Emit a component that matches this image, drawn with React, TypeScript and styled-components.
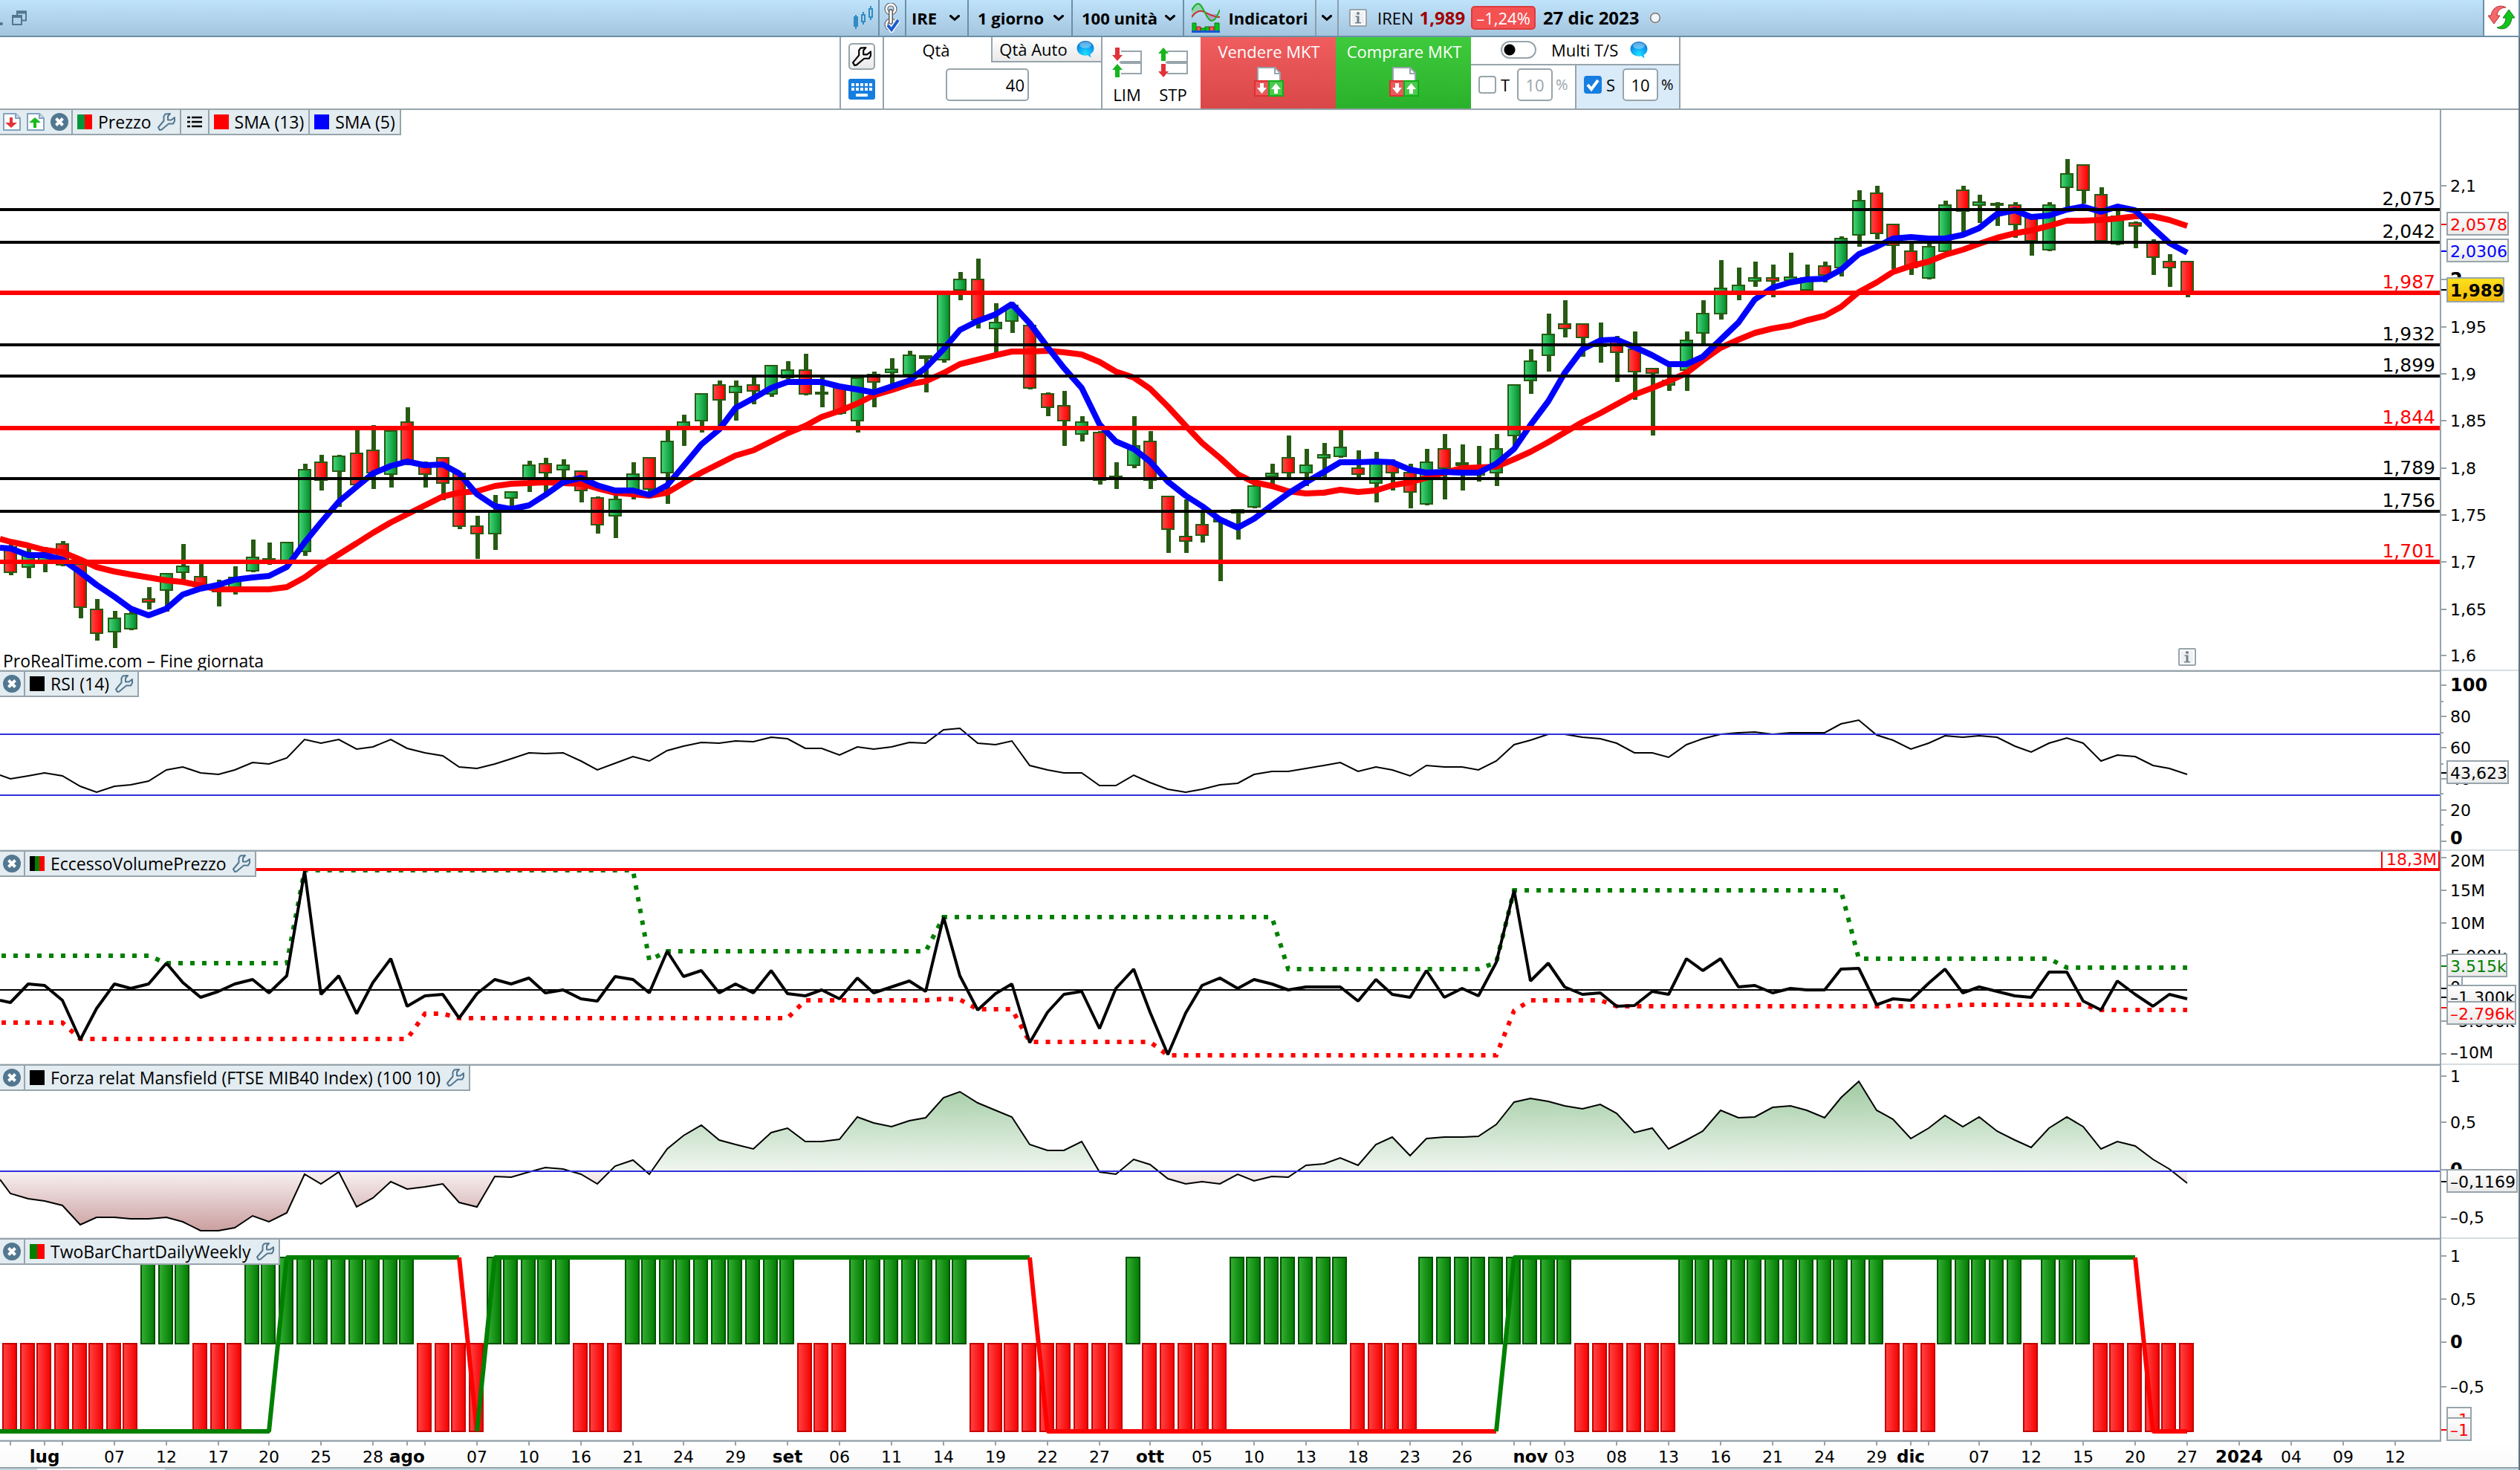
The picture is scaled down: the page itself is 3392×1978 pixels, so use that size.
import React from "react";
import styled, { createGlobalStyle } from "styled-components";

const LINE = "#97a4ab";
const LIGHT = "#d6dde0";
const STEEL = "#6b8fa8";
const SLATE = "#527790";
const UI_FONT = '"Open Sans", "Noto Sans", sans-serif';
const NUM_FONT = '"DejaVu Sans", Verdana, sans-serif';

/* ---------- market data, in plot coordinates ---------- */

const PLOT_WIDTH = 3284;
const barX = (i: number) => 2 * Math.round((14 + 23.254 * i) / 2);

type Kind = "u" | "d";
type Candle = [Kind, number, number, number, number];

// kind, wick top, body top, body bottom, wick bottom
const CANDLES: Candle[] = [
  ["d", 730, 735, 771, 774], ["u", 737, 745, 764, 778], ["u", 736, 748, 756, 770], ["d", 728, 731, 761, 762],
  ["d", 758, 758, 818, 832], ["d", 806, 819, 853, 862], ["u", 822, 831, 851, 872], ["u", 822, 825, 847, 848],
  ["d", 790, 805, 811, 820], ["u", 771, 771, 795, 823], ["u", 732, 761, 771, 783], ["d", 759, 775, 788, 788],
  ["u", 780, 791, 797, 816], ["u", 762, 776, 797, 800], ["u", 726, 749, 769, 770], ["u", 730, 751, 755, 760],
  ["u", 729, 729, 758, 758], ["u", 624, 631, 743, 748], ["d", 612, 621, 647, 660], ["u", 612, 613, 635, 682],
  ["d", 577, 609, 653, 653], ["d", 572, 605, 637, 658], ["u", 575, 579, 639, 656], ["d", 548, 567, 620, 626],
  ["d", 621, 624, 639, 656], ["d", 615, 615, 651, 673], ["d", 635, 636, 709, 712], ["d", 694, 707, 719, 752],
  ["u", 666, 687, 719, 740], ["u", 661, 661, 671, 687], ["u", 620, 625, 645, 662], ["d", 616, 623, 637, 663],
  ["u", 618, 625, 633, 645], ["d", 633, 633, 661, 676], ["d", 668, 669, 707, 718], ["u", 663, 671, 695, 724],
  ["u", 622, 637, 663, 672], ["d", 615, 615, 659, 667], ["u", 578, 593, 637, 678], ["u", 558, 567, 577, 600],
  ["u", 529, 529, 567, 582], ["d", 512, 517, 539, 578], ["u", 512, 519, 529, 566], ["d", 507, 517, 527, 544],
  ["u", 491, 491, 531, 534], ["u", 486, 497, 509, 510], ["d", 476, 497, 531, 532], ["u", 508, 527, 531, 548],
  ["d", 517, 518, 557, 558], ["u", 508, 508, 567, 582], ["d", 500, 503, 515, 548], ["u", 482, 496, 502, 527],
  ["u", 472, 477, 505, 505], ["u", 478, 478, 483, 528], ["u", 395, 395, 485, 488], ["u", 366, 375, 391, 404],
  ["d", 348, 375, 431, 442], ["u", 408, 433, 443, 475], ["u", 409, 410, 433, 448], ["d", 437, 437, 523, 524],
  ["d", 528, 529, 549, 560], ["d", 526, 545, 567, 600], ["u", 560, 567, 585, 594], ["d", 580, 581, 647, 652],
  ["u", 622, 640, 644, 658], ["u", 560, 599, 627, 630], ["d", 580, 593, 647, 658], ["d", 667, 667, 713, 744],
  ["d", 672, 721, 729, 744], ["d", 687, 705, 721, 730], ["u", 697, 698, 703, 782], ["u", 685, 685, 691, 726],
  ["u", 652, 653, 683, 684], ["u", 624, 636, 642, 652], ["d", 586, 615, 637, 643], ["u", 604, 625, 637, 654],
  ["u", 596, 611, 617, 643], ["u", 578, 601, 615, 616], ["d", 606, 629, 639, 643], ["u", 608, 618, 651, 676],
  ["d", 618, 623, 637, 660], ["d", 624, 635, 663, 684], ["u", 604, 621, 679, 680], ["d", 584, 603, 631, 672],
  ["u", 598, 622, 627, 660], ["u", 600, 632, 640, 648], ["u", 584, 603, 637, 654], ["u", 517, 517, 587, 602],
  ["u", 470, 485, 513, 530], ["u", 422, 449, 479, 500], ["d", 404, 435, 443, 454], ["d", 435, 435, 455, 480],
  ["u", 434, 462, 467, 488], ["d", 452, 458, 475, 514], ["d", 446, 469, 501, 538], ["d", 495, 495, 503, 586],
  ["u", 492, 511, 519, 526], ["u", 446, 457, 499, 526], ["u", 404, 421, 449, 463], ["u", 350, 387, 423, 430],
  ["u", 360, 383, 395, 404], ["u", 352, 373, 379, 386], ["d", 356, 373, 379, 400], ["u", 340, 372, 378, 378],
  ["u", 356, 373, 391, 391], ["d", 352, 357, 371, 380], ["u", 318, 320, 361, 372], ["u", 256, 269, 317, 332],
  ["d", 250, 259, 315, 322], ["d", 301, 301, 331, 362], ["d", 327, 337, 361, 370], ["u", 318, 331, 375, 376],
  ["u", 270, 275, 339, 339], ["d", 250, 255, 285, 317], ["u", 262, 271, 277, 300], ["u", 272, 273, 277, 304],
  ["d", 272, 275, 303, 320], ["d", 290, 292, 325, 344], ["u", 272, 275, 337, 338], ["u", 214, 233, 253, 282],
  ["d", 221, 221, 257, 274], ["d", 252, 261, 325, 325], ["u", 282, 290, 329, 330], ["d", 298, 299, 305, 334],
  ["d", 322, 326, 347, 370], ["d", 342, 351, 361, 386], ["d", 351, 351, 393, 400],
];

// every series starts with the value at the left edge of the plot
const SMA13 = [
  725, 729, 734, 740, 743, 753, 763, 769, 773, 777, 781, 783, 788, 793, 793, 793, 793, 790, 777, 761, 746, 731, 717, 703,
  692, 680, 668, 663, 661, 654, 651, 650, 649, 650, 651, 657, 663, 665, 667, 663, 650, 636, 624, 613, 606, 594, 583, 573,
  561, 553, 543, 532, 525, 517, 513, 502, 490, 484, 478, 473, 473, 472, 474, 477, 487, 500, 508, 523, 547, 573, 596, 616,
  638, 649, 654, 661, 664, 663, 659, 662, 660, 653, 649, 643, 636, 630, 629, 628, 618, 608, 595, 582, 568, 556, 544, 531,
  522, 513, 502, 485, 468, 457, 448, 442, 438, 431, 425, 413, 393, 380, 366, 358, 352, 343, 336, 328, 320, 314, 310, 304,
  297, 297, 296, 294, 291, 291, 296, 304,
];
const SMA5 = [
  737, 738, 747, 747, 753, 770, 787, 803, 819, 828, 819, 800, 792, 787, 780, 777, 775, 763, 730, 703, 675, 655, 637, 627,
  621, 626, 625, 637, 665, 681, 685, 680, 666, 649, 643, 653, 660, 660, 666, 653, 627, 598, 578, 549, 536, 522, 514, 514,
  514, 520, 524, 528, 520, 512, 495, 470, 444, 432, 423, 409, 435, 467, 495, 522, 571, 594, 604, 621, 648, 667, 681, 699,
  710, 698, 680, 664, 649, 635, 622, 622, 621, 622, 632, 636, 635, 636, 636, 624, 604, 572, 540, 502, 470, 458, 457, 467,
  478, 490, 490, 480, 457, 434, 403, 387, 380, 376, 375, 363, 342, 332, 321, 319, 321, 321, 316, 307, 288, 283, 292, 290,
  282, 278, 285, 278, 283, 307, 327, 340,
];
const RSI = [
  1043, 1048, 1044, 1040, 1044, 1058, 1066, 1058, 1056, 1051, 1036, 1032, 1040, 1042, 1036, 1026, 1028, 1020, 995, 1000,
  995, 1008, 1005, 995, 1007, 1013, 1017, 1032, 1034, 1028, 1021, 1013, 1014, 1013, 1024, 1036, 1027, 1018, 1024, 1010,
  1004, 999, 1000, 997, 998, 992, 994, 1007, 1007, 1016, 1005, 1008, 1005, 999, 1000, 982, 980, 1000, 1002, 997, 1030,
  1036, 1040, 1040, 1057, 1057, 1043, 1053, 1062, 1066, 1062, 1056, 1054, 1042, 1038, 1038, 1034, 1030, 1026, 1038, 1032,
  1036, 1044, 1030, 1032, 1032, 1036, 1024, 1002, 996, 988, 988, 992, 994, 1000, 1013, 1013, 1019, 1002, 994, 988, 986,
  985, 988, 986, 986, 986, 974, 969, 989, 996, 1008, 1000, 990, 992, 990, 992, 1004, 1012, 1000, 993, 1000, 1024, 1016,
  1018, 1030, 1034, 1042,
];
const EXCESS = [
  1346, 1349, 1324, 1326, 1346, 1399, 1357, 1324, 1330, 1324, 1296, 1322, 1342, 1334, 1324, 1318, 1336, 1313, 1172, 1338,
  1313, 1364, 1322, 1290, 1354, 1340, 1338, 1370, 1337, 1318, 1324, 1316, 1336, 1332, 1344, 1347, 1314, 1318, 1336, 1280,
  1314, 1306, 1336, 1324, 1336, 1306, 1337, 1340, 1332, 1344, 1316, 1336, 1328, 1320, 1334, 1234, 1313, 1359, 1337, 1324,
  1403, 1362, 1338, 1334, 1384, 1330, 1304, 1362, 1419, 1363, 1326, 1316, 1330, 1318, 1324, 1332, 1328, 1328, 1328, 1347,
  1318, 1338, 1342, 1306, 1342, 1330, 1340, 1295, 1198, 1320, 1296, 1328, 1338, 1336, 1354, 1353, 1334, 1338, 1290, 1306,
  1290, 1328, 1326, 1336, 1330, 1332, 1332, 1304, 1303, 1352, 1344, 1346, 1323, 1304, 1336, 1328, 1334, 1340, 1342, 1308,
  1308, 1347, 1359, 1320, 1338, 1354, 1338, 1344,
];
const MANSFIELD = [
  1587, 1606, 1613, 1616, 1622, 1648, 1638, 1638, 1640, 1640, 1638, 1644, 1656, 1656, 1652, 1636, 1644, 1632, 1580, 1593,
  1577, 1624, 1612, 1590, 1600, 1597, 1593, 1618, 1624, 1583, 1584, 1577, 1571, 1573, 1580, 1593, 1569, 1561, 1580, 1546,
  1528, 1514, 1534, 1540, 1546, 1524, 1518, 1536, 1536, 1533, 1503, 1511, 1516, 1508, 1504, 1477, 1469, 1484, 1494, 1503,
  1540, 1548, 1548, 1536, 1577, 1580, 1560, 1567, 1586, 1593, 1590, 1593, 1580, 1589, 1583, 1584, 1568, 1566, 1558, 1568,
  1540, 1530, 1555, 1532, 1530, 1530, 1529, 1513, 1483, 1478, 1482, 1488, 1492, 1486, 1498, 1524, 1518, 1546, 1534, 1522,
  1494, 1504, 1503, 1490, 1488, 1494, 1504, 1477, 1455, 1494, 1506, 1532, 1518, 1501, 1516, 1503, 1522, 1534, 1544, 1518,
  1503, 1516, 1546, 1536, 1542, 1560, 1573, 1592,
];

// [bar, y] corners of the stepped bands
const UPPER_BAND: [number, number][] = [
  [-0.5, 1286], [8, 1286], [9, 1296], [16, 1296], [17, 1171], [36, 1171], [37, 1292], [38, 1280], [53, 1280], [54, 1234],
  [73, 1234], [74, 1304], [85, 1304], [86, 1295], [87, 1198], [106, 1198], [107, 1290], [118, 1290], [119, 1302], [126, 1302],
];
const LOWER_BAND: [number, number][] = [
  [-0.5, 1376], [3, 1376], [4, 1398], [23, 1398], [24, 1364], [25, 1364], [26, 1370], [45, 1370], [46, 1346], [53, 1346],
  [54, 1344], [55, 1345], [56, 1358], [58, 1358], [59, 1402], [66, 1402], [67, 1420], [86, 1420], [87, 1360], [88, 1346],
  [92, 1346], [93, 1354], [112, 1354], [113, 1352], [120, 1352], [121, 1359], [126, 1359],
];

// first bar of each daily run, starting with a falling one
const DAILY_RUNS = [0, 8, 11, 14, 24, 28, 33, 36, 46, 49, 56, 65, 66, 71, 78, 82, 91, 97, 109, 112, 117, 118, 121, 127];
const WEEKLY: { color: string; points: [number, number][] }[] = [
  { color: "#008000", points: [[-0.7, 1926], [15, 1926], [16, 1692], [26, 1692]] },
  { color: "#ff0000", points: [[26, 1692], [27, 1926]] },
  { color: "#008000", points: [[27, 1926], [28, 1692], [59, 1692]] },
  { color: "#ff0000", points: [[59, 1692], [60, 1926], [86, 1926]] },
  { color: "#008000", points: [[86, 1926], [87, 1692], [123, 1692]] },
  { color: "#ff0000", points: [[123, 1692], [124, 1926], [126, 1926]] },
];

const LEVELS = [
  { label: "2,075", y: 282, key: false },
  { label: "2,042", y: 326, key: false },
  { label: "1,987", y: 394, key: true },
  { label: "1,932", y: 464, key: false },
  { label: "1,899", y: 506, key: false },
  { label: "1,844", y: 576, key: true },
  { label: "1,789", y: 644, key: false },
  { label: "1,756", y: 688, key: false },
  { label: "1,701", y: 756, key: true },
];

const DATES: [number, string][] = [
  [0, ""], [2, "lug"], [3, ""], [6, "07"], [9, "12"], [12, "17"], [15, "20"], [18, "25"], [21, "28"], [23, "ago"], [24, ""],
  [27, "07"], [30, "10"], [33, "16"], [36, "21"], [39, "24"], [42, "29"], [45, "set"], [48, "06"], [51, "11"], [54, "14"],
  [57, "19"], [60, "22"], [63, "27"], [66, "ott"], [69, "05"], [72, "10"], [75, "13"], [78, "18"], [81, "23"], [84, "26"],
  [87, ""], [88, "nov"], [90, "03"], [93, "08"], [96, "13"], [99, "16"], [102, "21"], [105, "24"], [108, "29"],
  [110, "dic"], [111, ""], [114, "07"], [117, "12"], [120, "15"], [123, "20"], [126, "27"], [129, "2024"], [132, "04"],
  [135, "09"], [138, "12"],
];

const trace = (values: number[]) => values.map((v, i) => `${i === 0 ? 0 : barX(i - 1)},${v}`).join(" ");
const corners = (points: [number, number][]) => points.map(([i, y]) => `${barX(i)},${y}`).join(" ");

/* ---------- page frame ---------- */

const GlobalStyle = createGlobalStyle`
  body { margin: 0; background: #fff; }
  *, *::before, *::after { box-sizing: border-box; }
  button, input, select { font: inherit; color: inherit; margin: 0; }
  button { cursor: pointer; }
  svg { display: block; flex: none; }
`;

const Page = styled.main`
  min-height: 100vh;
  display: flex;
  flex-direction: column;
  background: #fff;
  color: #000;
  font: 22px/30px ${UI_FONT};
`;

const TopBar = styled.header`
  display: grid;
  grid-template-columns: 1fr auto 1fr;
  height: 50px;
  background: linear-gradient(#bfe3fb, #a4c5de);
  border-bottom: 2px solid ${STEEL};
`;

const WindowControls = styled.div`
  display: flex;
  align-items: center;
  gap: 12px;
`;

const Dot = styled.span`
  width: 4px;
  height: 4px;
  margin-top: 16px;
  border-radius: 0 2px 2px 0;
  background: ${SLATE};
`;

const BareButton = styled.button`
  display: flex;
  align-items: center;
  justify-content: center;
  padding: 0;
  border: 0;
  background: none;
`;

const BarGroup = styled.div`
  display: flex;
`;

const BarCell = styled.div<{ $w: number; $grey?: boolean; $end?: boolean }>`
  display: flex;
  align-items: center;
  justify-content: ${(p) => (p.$end ? "flex-end" : "center")};
  width: ${(p) => p.$w}px;
  padding-right: ${(p) => (p.$end ? 6 : 0)}px;
  border-right: 2px solid ${(p) => (p.$grey ? "#8a9dab" : STEEL)};
`;

const PickerCell = styled.div<{ $w: number }>`
  display: grid;
  align-items: center;
  width: ${(p) => p.$w}px;
  border-right: 2px solid ${STEEL};
  > * { grid-area: 1 / 1; }
  > svg { justify-self: end; margin-right: 10px; pointer-events: none; }
`;

const Picker = styled.select<{ $pad: number }>`
  appearance: none;
  width: 100%;
  height: 48px;
  padding: 0 0 0 ${(p) => p.$pad}px;
  border: 0;
  background: none;
  font-weight: 700;
`;

const IndicatorButton = styled(BareButton)`
  width: 178px;
  gap: 12px;
  border-right: 2px solid #8a9dab;
  font-weight: 700;
`;

const Quote = styled.div`
  display: flex;
  align-items: center;
  width: 460px;
  padding-left: 14px;
`;

const QuoteName = styled.span`
  margin: 0 8px 0 14px;
`;

const QuotePrice = styled.strong`
  color: #a00000;
  font-size: 24px;
`;

const QuoteChange = styled.span`
  height: 32px;
  margin: 0 10px 0 8px;
  padding: 0 5px;
  border: 2px solid #dd3b3e;
  border-radius: 5px;
  background: #f45153;
  color: #fff;
  line-height: 28px;
`;

const QuoteDate = styled.strong`
  margin-right: 12px;
  font-size: 24px;
`;

const ReloadCell = styled(BareButton)`
  justify-self: end;
  width: 50px;
  border-left: 2px solid ${STEEL};
  border-right: 2px solid ${STEEL};
  background: #fff;
`;

/* ---------- trading strip ---------- */

const Body = styled.div`
  flex: 1;
  display: flex;
  flex-direction: column;
  border-right: 2px solid #60737e;
`;

const TradeStrip = styled.section`
  display: flex;
  justify-content: center;
  height: 98px;
  padding-left: 2px;
  border-bottom: 2px solid ${LINE};
`;

const ToolCell = styled.div`
  display: flex;
  flex-direction: column;
  align-items: center;
  gap: 12px;
  width: 60px;
  padding-top: 8px;
  border: solid ${LINE};
  border-width: 0 2px;
`;

const WrenchButton = styled(BareButton)`
  width: 36px;
  height: 36px;
  border: 2px solid ${LINE};
  border-radius: 5px;
  background: linear-gradient(#fff, #e9e9e9);
`;

const QtyCell = styled.div`
  width: 294px;
  border-right: 2px solid ${LINE};
`;

const QtyTabs = styled.div`
  display: flex;
  height: 34px;
`;

const QtyTab = styled(BareButton)<{ $off?: boolean }>`
  width: ${(p) => (p.$off ? 148 : 144)}px;
  gap: 12px;
  padding-right: ${(p) => (p.$off ? 0 : 4)}px;
  background: ${(p) => (p.$off ? "linear-gradient(#fff, #e9e9e9)" : "none")};
  border: solid ${LINE};
  border-width: ${(p) => (p.$off ? "0 0 2px 2px" : "0")};
`;

const QtyField = styled.div`
  display: flex;
  justify-content: center;
  padding: 8px 14px 0 0;
`;

const NumberInput = styled.input<{ $w: number; $muted?: boolean; $right?: boolean }>`
  width: ${(p) => p.$w}px;
  height: 44px;
  padding: 0 ${(p) => (p.$right ? 4 : 0)}px 0 0;
  border: 2px solid ${LINE};
  border-radius: 5px;
  background: #fff;
  color: ${(p) => (p.$muted ? LINE : "#000")};
  text-align: ${(p) => (p.$right ? "right" : "center")};
`;

const OrderCell = styled.div`
  display: flex;
  justify-content: center;
  width: 132px;
  padding-right: 4px;
`;

const OrderButton = styled(BareButton)`
  flex-direction: column;
  justify-content: flex-start;
  gap: 8px;
  width: 62px;
  padding-top: 14px;
`;

const MarketButton = styled(BareButton)<{ $side: "sell" | "buy" }>`
  flex-direction: column;
  justify-content: flex-start;
  gap: 6px;
  width: 182px;
  padding: 4px 0 0 2px;
  background: ${(p) => (p.$side === "sell" ? "linear-gradient(#f05d5f, #d94748)" : "linear-gradient(#3fca3c, #2ab12b)")};
  color: #fff;
`;

const StopCell = styled.div`
  width: 282px;
  border-right: 2px solid ${LINE};
`;

const MultiRow = styled.div`
  display: flex;
  align-items: center;
  height: 38px;
  padding: 0 0 2px 40px;
  border-bottom: 2px solid ${LINE};
`;

const MultiLabel = styled.label`
  display: flex;
  align-items: center;
  gap: 20px;
  margin-right: 16px;
`;

const Toggle = styled.input`
  appearance: none;
  width: 48px;
  height: 24px;
  margin: 0;
  border: 2px solid ${LINE};
  border-radius: 12px;
  background: radial-gradient(circle at 10px 10px, #000 7px, #fff 8px);
`;

const StopRow = styled.div`
  display: grid;
  grid-template-columns: 142px 1fr;
`;

const StopBox = styled.div<{ $active?: boolean }>`
  display: flex;
  align-items: center;
  height: 58px;
  padding-left: 10px;
  padding-bottom: 6px;
  border-right: ${(p) => (p.$active ? "0" : `2px solid ${LINE}`)};
  background: ${(p) => (p.$active ? "#d9eaf9" : "#fff")};
`;

const StopCheck = styled.label`
  display: flex;
  align-items: center;
  gap: 6px;
  width: 52px;
`;

const CheckBox = styled.input`
  appearance: none;
  width: 24px;
  height: 24px;
  margin: 0;
  border: 2px solid ${LINE};
  border-radius: 4px;
  background: #fff;
  &:checked {
    border-color: #167ee0;
    background: #167ee0;
  }
`;

const CheckStack = styled.span`
  display: grid;
  > * { grid-area: 1 / 1; }
  > svg { pointer-events: none; }
`;

const Percent = styled.span<{ $muted?: boolean }>`
  margin-left: 4px;
  font-size: 20px;
  color: ${(p) => (p.$muted ? LINE : "#000")};
`;

/* ---------- chart panels ---------- */

const PanelRow = styled.section<{ $h: number }>`
  display: grid;
  grid-template-columns: minmax(0, 1fr) 104px;
  grid-template-rows: minmax(0, 1fr);
  height: ${(p) => p.$h}px;
`;

const Plot = styled.div`
  position: relative;
  border: solid ${LINE};
  border-width: 0 2px 2px 0;
  box-shadow: inset 0 -1px ${LIGHT};
  overflow: hidden;
`;

const Axis = styled.div<{ $last?: boolean }>`
  height: calc(100% - 1px);
  border-bottom: ${(p) => (p.$last ? "0" : `2px solid ${LIGHT}`)};
  overflow: hidden;
`;

const Canvas = styled.svg`
  width: 100%;
  height: 100%;
  overflow: visible;
`;

const Legend = styled.div`
  position: absolute;
  left: 0;
  top: 0;
  display: flex;
  height: 34px;
  background: #e3ecf1;
  border-bottom: 2px solid ${LINE};
  font-size: 23px;
`;

const LegendCell = styled.div<{ $pad: number }>`
  display: flex;
  align-items: center;
  gap: 8px;
  padding: 0 ${(p) => p.$pad}px;
  border-right: 2px solid ${LINE};
`;

const Swatch = styled.span<{ $colors: string[] }>`
  width: 20px;
  height: 20px;
  background: ${(p) => {
    const step = 100 / p.$colors.length;
    return `linear-gradient(90deg, ${p.$colors.map((c, i) => `${c} ${i * step}% ${(i + 1) * step}%`).join(", ")})`;
  }};
`;

const Watermark = styled.span`
  position: absolute;
  left: 4px;
  bottom: 0;
  font-size: 23px;
  line-height: 26px;
`;

const DateRow = styled.footer`
  display: grid;
  grid-template-columns: minmax(0, 1fr) 106px;
  grid-template-rows: minmax(0, 1fr);
  height: 36px;
  border-bottom: 2px solid ${LINE};
  background: linear-gradient(#fff, #fafafa);
`;

const BottomStrip = styled.div`
  height: 2px;
  background: linear-gradient(90deg, #c4d6df 50px, #f4fbfd 50px 222px, #c4d6df 222px);
`;

/* ---------- icons ---------- */

const Chevron = () => (
  <svg width="14" height="8" viewBox="0 0 14 8">
    <path d="M1.5 1.5 7 6.3l5.5-4.8" fill="none" stroke="#000" strokeWidth="3" strokeLinecap="round" />
  </svg>
);

const RestoreIcon = () => (
  <svg width="20" height="20" viewBox="0 0 20 20" fill="none" stroke={SLATE}>
    <path d="M7 6V1.5h12v12h-5" strokeWidth="2" />
    <path d="M6 2.5h13" strokeWidth="4" />
    <rect x="1" y="7" width="12" height="12" strokeWidth="2" />
    <path d="M1 8h12" strokeWidth="4" />
  </svg>
);

const CandlesIcon = () => (
  <svg width="28" height="34" viewBox="0 0 28 34" fill="none" stroke="#318cc4" strokeWidth="2">
    <path d="M4 13v19" />
    <rect x="2" y="16" width="4" height="12" fill="#318cc4" />
    <path d="M14 9v4M14 22v4" />
    <rect x="12" y="13" width="4" height="9" />
    <path d="M24 1v4M24 16v4" />
    <rect x="22" y="5" width="4" height="11" />
  </svg>
);

const LinkIcon = () => (
  <svg width="22" height="40" viewBox="0 0 22 40" fill="none">
    <circle cx="9" cy="8" r="6" stroke="#5a5a5a" strokeWidth="5" />
    <circle cx="9" cy="8" r="6" stroke="#fff" strokeWidth="2.8" />
    <circle cx="9" cy="29" r="6" stroke="#5a5a5a" strokeWidth="5" />
    <circle cx="9" cy="29" r="6" stroke="#fff" strokeWidth="2.8" />
    <path d="M9 11v15" stroke="#5a5a5a" strokeWidth="6" strokeLinecap="round" />
    <path d="M9 11v15" stroke="#fff" strokeWidth="3" strokeLinecap="round" />
    <path d="M5 30l5 6 9-13" stroke="#fff" strokeWidth="7" />
    <path d="M5 30l5 6 9-13" stroke="#1c5cd0" strokeWidth="4" />
  </svg>
);

const IndicatorIcon = () => (
  <svg width="38" height="40" viewBox="0 0 38 40">
    <path d="M0 10C3 4 6 1 9 1s6 4 10 12v-1C13 12 8 10 6 13l-6 9z" fill="#8fd4b0" />
    <path d="M19 13c3 7 5 11 8 11s7-4 10-10c-6 2-12 1-18-1z" fill="#a9a6c4" />
    <path d="M0 19C5 12 9 10 14 11s13 8 24 8" fill="none" stroke="#d02a36" strokeWidth="2" />
    <path d="M0 10C3 4 6 1 9 1c6 0 11 23 18 23 4 0 8-7 11-15" fill="none" stroke="#18b020" strokeWidth="2" />
    <path d="M1 38V27h5v11zM12 38v-4h6v4zM18 38v-6h6v6zM31 38V27h6v11z" fill="#00c814" stroke="#067a10" />
    <path d="M7 38v-6h5v6zM24 38v-6h6v6z" fill="#f45b5b" stroke="#a11" />
    <path d="M0 38.5h38" stroke="#1157d0" strokeWidth="3" />
  </svg>
);

const InfoGlyph = ({ x = 0, y = 0 }: { x?: number; y?: number }) => (
  <g transform={`translate(${x} ${y})`}>
    <rect x="1" y="1" width="22" height="22" rx="1" fill="#fff" stroke={LINE} strokeWidth="2" />
    <rect x="4" y="4" width="16" height="16" fill="#eef0f1" />
    <circle cx="12" cy="6" r="2" fill="#6f818b" />
    <path d="M8.500 9.500h5v8.500h2.500v1.500h-8v-1.500h2.500v-7h-2z" fill="#6f818b" />
  </g>
);

const ReloadIcon = () => (
  <svg width="36" height="34" viewBox="0 0 36 34">
    <path d="M24 3C17-1 6 1 4 14H0l8 11 8-11h-4c0-5 4-11 12-11z" fill="#f3696b" stroke="#b92a30" />
    <path d="M12 30c7 4 18 2 20-13h4L28 6l-8 11h4c0 6-4 12-12 13z" fill="#14c41c" stroke="#0a7d12" />
  </svg>
);

const WrenchIcon = ({ color = SLATE, size = 24 }: { color?: string; size?: number }) => (
  <svg width={size} height={size} viewBox="0 0 24 24">
    <path
      d="M8.500 4.500 10.500 1.500 17 1 14 4.500V9.500H18.500L23 6V11L21 14.500H15L5.500 22.500 3 23 1 19.500 8.500 10.500z"
      fill="none"
      stroke={color}
      strokeWidth="2"
      strokeLinejoin="round"
    />
  </svg>
);

const KeyboardIcon = () => (
  <svg width="36" height="28" viewBox="0 0 36 28">
    <rect width="36" height="28" rx="3" fill="#167ee0" />
    {[4, 10, 16, 22, 28].map((x) => (
      <React.Fragment key={x}>
        <rect x={x} y="6" width="4" height="4" fill="#fff" />
        <rect x={x} y="12" width="4" height="4" fill="#fff" />
      </React.Fragment>
    ))}
    <rect x="10" y="20" width="16" height="4" rx="1" fill="#fff" />
  </svg>
);

const BubbleIcon = () => (
  <svg width="24" height="24" viewBox="0 0 24 24">
    <path d="M12 1c6.500 0 11.500 4.500 11.500 10 0 3.500-2 6.500-5 8l1 4.500-4.500-3.200a14 14 0 0 1-3 .4C5.500 20.700.5 16.500.5 11S5.500 1 12 1z" fill="url(#bubble)" />
    <ellipse cx="12" cy="6.500" rx="8" ry="4.200" fill="#fff" opacity="0.35" />
  </svg>
);

const ArrowUp = "M0 8 7 0l7 8h-4v10H4V8z";
const ArrowDown = "M0 10h4V0h6v10h4L7 18z";

const OrderIcon = ({ limit }: { limit?: boolean }) => (
  <svg width="40" height="40" viewBox="0 0 40 40">
    <path d="M12 5h27v30H12" fill="none" stroke={LINE} strokeWidth="2" />
    <path d="M9 20l3-2h26v4H12z" fill={LINE} />
    <path d={limit ? ArrowDown : ArrowUp} fill={limit ? "#e13238" : "#17b51d"} />
    <path d={limit ? ArrowUp : ArrowDown} transform="translate(0 22)" fill={limit ? "#17b51d" : "#e13238"} />
  </svg>
);

const MarketIcon = () => (
  <svg width="40" height="40" viewBox="0 0 40 40">
    <path d="M5 20V1h23l7 7v12z" fill="#fff" stroke={LINE} strokeWidth="2" />
    <path d="M28 1v8h7" fill="none" stroke={LINE} strokeWidth="2" />
    <rect x="1" y="19" width="19" height="20" fill="#e85a5c" stroke="#e02e33" strokeWidth="2" />
    <rect x="20" y="19" width="19" height="20" fill="#4cc94e" stroke="#0fae17" strokeWidth="2" />
    <path d="M8 22h5v6h4l-6.500 8L4 28h4z" fill="#fff" />
    <path d="M27 36h5v-6h4l-6.500-8-6.500 8h4z" fill="#fff" />
  </svg>
);

const PageIcon = ({ down }: { down?: boolean }) => (
  <svg width="24" height="24" viewBox="0 0 24 24">
    <path d="M1 1h16l6 6v16H1z" fill="#fff" stroke="#82a3c0" strokeWidth="2" strokeLinejoin="round" />
    <path d="M17 1v6h6" fill="#d5e0ea" stroke="#82a3c0" strokeWidth="2" />
    {down ? (
      <path d="M9 6h4v7h6l-8 7-8-7h6z" fill="#e0343a" />
    ) : (
      <path d="M9 20h4v-7h6l-8-7-8 7h6z" fill="#17bb1d" />
    )}
  </svg>
);

const CloseIcon = () => (
  <svg width="24" height="24" viewBox="0 0 24 24">
    <circle cx="12" cy="12" r="12" fill={SLATE} />
    <path d="M7.500 7.500l9 9M16.500 7.500l-9 9" stroke="#fff" strokeWidth="4" />
  </svg>
);

const ListIcon = () => (
  <svg width="20" height="16" viewBox="0 0 20 16" stroke="#000" strokeWidth="2.500">
    <path d="M0 2h4M6 2h14M0 8h4M6 8h14M0 14h4M6 14h14" />
  </svg>
);

/* ---------- shared chart parts ---------- */

const Gradients = () => (
  <defs>
    <radialGradient id="bubble" cx="0.5" cy="0.75" r="0.75">
      <stop offset="0" stopColor="#1fe0ff" />
      <stop offset="0.6" stopColor="#0c9ff2" />
      <stop offset="1" stopColor="#0b6fc4" />
    </radialGradient>
    {[
      ["candleUp", "#3fd376", "#07902f"],
      ["candleDown", "#ff4444", "#ff0000"],
      ["barUp", "#35b035", "#007a00"],
      ["barDown", "#ff4545", "#f60000"],
    ].map(([id, from, to]) => (
      <linearGradient key={id} id={id}>
        <stop offset="0" stopColor={from} />
        <stop offset="1" stopColor={to} />
      </linearGradient>
    ))}
    <linearGradient id="above" gradientUnits="userSpaceOnUse" x1="0" y1="1455" x2="0" y2="1576">
      <stop offset="0" stopColor="#a0cba2" />
      <stop offset="1" stopColor="#f0f6f0" />
    </linearGradient>
    <linearGradient id="below" gradientUnits="userSpaceOnUse" x1="0" y1="1576" x2="0" y2="1656">
      <stop offset="0" stopColor="#f8f1f1" />
      <stop offset="1" stopColor="#cb9f9f" />
    </linearGradient>
    <clipPath id="aboveClip">
      <rect x="0" y="1434" width={PLOT_WIDTH} height="142" />
    </clipPath>
    <clipPath id="belowClip">
      <rect x="0" y="1576" width={PLOT_WIDTH} height="92" />
    </clipPath>
    <linearGradient id="tag" x2="0" y2="1">
      <stop offset="0" stopColor="#fff" />
      <stop offset="1" stopColor="#e9e9e9" />
    </linearGradient>
    <linearGradient id="tagPrice" x2="0" y2="1">
      <stop offset="0" stopColor="#ffe21c" />
      <stop offset="1" stopColor="#f1b808" />
    </linearGradient>
  </defs>
);

interface Tick {
  y: number;
  label?: string;
  bold?: boolean;
  base?: number;
}
interface Tag {
  y: number;
  tick: number;
  label: string;
  w: number;
  h?: number;
  color?: string;
  price?: boolean;
}

const AxisScale = ({ top, ticks, tags, last }: { top: number; ticks: Tick[]; tags: Tag[]; last?: boolean }) => (
  <Axis $last={last}>
    <Canvas fontFamily={NUM_FONT} fontSize="22">
      <g transform={`translate(0 ${-top})`}>
        {ticks.map((t) => (
          <g key={t.y}>
            <path d={`M0 ${t.y}h${t.label ? 7 : 3}`} stroke={LINE} strokeWidth="2" />
            {t.label && (
              <text x="12" y={t.base ?? t.y + 8} fontWeight={t.bold ? 700 : 400} fontSize={t.bold ? 24 : 22}>
                {t.label}
              </text>
            )}
          </g>
        ))}
        {tags.map((t, i) => (
          <g key={i}>
            <path d={`M0 ${t.tick}h7`} stroke={t.color ?? "#000"} strokeWidth="2" />
            <rect
              x="8"
              y={t.y + 1}
              width={t.w - 2}
              height={(t.h ?? 32) - 2}
              fill={t.price ? "url(#tagPrice)" : "url(#tag)"}
              stroke={LINE}
              strokeWidth="2"
            />
            <text
              x="12"
              y={t.y + 25 + (t.price ? 1 : 0)}
              fill={t.color ?? "#000"}
              fontWeight={t.price ? 700 : 400}
              fontSize={t.price ? 23 : 22}
            >
              {t.label}
            </text>
          </g>
        ))}
      </g>
    </Canvas>
  </Axis>
);

interface PanelProps {
  top: number;
  height: number;
  legend: React.ReactNode;
  ticks: Tick[];
  tags: Tag[];
  last?: boolean;
  overlay?: React.ReactNode;
  extra?: React.ReactNode;
  children: React.ReactNode;
}

const Panel = ({ top, height, legend, ticks, tags, last, overlay, extra, children }: PanelProps) => (
  <PanelRow $h={height}>
    <Plot>
      <Canvas>
        <svg width="100%" height={height} viewBox={`0 ${top} ${PLOT_WIDTH} ${height}`} preserveAspectRatio="none">
          {children}
        </svg>
        {overlay && <g transform={`translate(0 ${-top})`}>{overlay}</g>}
      </Canvas>
      <Legend>{legend}</Legend>
      {extra}
    </Plot>
    <AxisScale top={top} ticks={ticks} tags={tags} last={last} />
  </PanelRow>
);

const IndicatorLegend = ({ name, colors }: { name: string; colors: string[] }) => (
  <>
    <LegendCell $pad={4}>
      <BareButton aria-label={`Chiudi ${name}`}>
        <CloseIcon />
      </BareButton>
    </LegendCell>
    <LegendCell $pad={6}>
      <Swatch $colors={colors} />
      {name}
      <BareButton aria-label={`Proprietà ${name}`}>
        <WrenchIcon />
      </BareButton>
    </LegendCell>
  </>
);

const HLine = ({ y, color, width }: { y: number; color: string; width: number }) => (
  <path d={`M0 ${y}H${PLOT_WIDTH}`} stroke={color} strokeWidth={width} />
);

/* ---------- panels ---------- */

const PricePanel = () => (
  <Panel
    top={148}
    height={756}
    legend={
      <>
        <LegendCell $pad={4}>
          <BareButton aria-label="Sposta giù">
            <PageIcon down />
          </BareButton>
          <BareButton aria-label="Sposta su">
            <PageIcon />
          </BareButton>
          <BareButton aria-label="Chiudi Prezzo">
            <CloseIcon />
          </BareButton>
        </LegendCell>
        <LegendCell $pad={6}>
          <Swatch $colors={["#00963a", "#ff0000"]} />
          Prezzo
          <BareButton aria-label="Proprietà Prezzo">
            <WrenchIcon />
          </BareButton>
        </LegendCell>
        <LegendCell $pad={8}>
          <BareButton aria-label="Elenco">
            <ListIcon />
          </BareButton>
        </LegendCell>
        <LegendCell $pad={6}>
          <Swatch $colors={["#ff0000"]} />
          SMA (13)
        </LegendCell>
        <LegendCell $pad={6}>
          <Swatch $colors={["#0000ff"]} />
          SMA (5)
        </LegendCell>
      </>
    }
    ticks={[
      { y: 250, label: "2,1" },
      { y: 376, label: "2", bold: true },
      { y: 440, label: "1,95" },
      { y: 503, label: "1,9" },
      { y: 566, label: "1,85" },
      { y: 630, label: "1,8" },
      { y: 693, label: "1,75" },
      { y: 756, label: "1,7" },
      { y: 820, label: "1,65" },
      { y: 882, label: "1,6" },
    ]}
    tags={[
      { y: 285, tick: 302, label: "2,0578", w: 84, color: "#ff0000" },
      { y: 321, tick: 338, label: "2,0306", w: 84, color: "#0000ff" },
      { y: 373, tick: 390, label: "1,989", w: 78, h: 34, price: true },
    ]}
    overlay={
      <>
        {LEVELS.map((l) => (
          <text
            key={l.label}
            x="100%"
            dx="-6"
            y={l.y - 6}
            textAnchor="end"
            fontFamily={NUM_FONT}
            fontSize="25"
            fill={l.key ? "#ff0000" : "#000"}
          >
            {l.label}
          </text>
        ))}
      </>
    }
    extra={<Watermark>ProRealTime.com – Fine giornata</Watermark>}
  >
    <g shapeRendering="crispEdges">
      {CANDLES.map(([kind, wickTop, bodyTop, bodyBottom, wickBottom], i) => {
        const x = barX(i);
        const inner = bodyBottom - bodyTop - 4;
        return (
          <g key={i}>
            <rect x={x - 2} y={wickTop} width="6" height={wickBottom - wickTop} fill="#275b12" />
            <rect x={x - 9} y={bodyTop} width="18" height={bodyBottom - bodyTop} fill="#275b12" />
            {inner > 1 && (
              <rect x={x - 7} y={bodyTop + 2} width="14" height={inner} fill={`url(#${kind === "u" ? "candleUp" : "candleDown"})`} />
            )}
          </g>
        );
      })}
    </g>
    <polyline points={trace(SMA13)} fill="none" stroke="#ff0000" strokeWidth="8" strokeLinejoin="bevel" />
    <polyline points={trace(SMA5)} fill="none" stroke="#0000ff" strokeWidth="8" strokeLinejoin="bevel" />
    {LEVELS.map((l) => (
      <HLine key={l.label} y={l.y} color={l.key ? "#ff0000" : "#000"} width={l.key ? 6 : 4} />
    ))}
    <InfoGlyph x={2932} y={872} />
  </Panel>
);

const RsiPanel = () => (
  <Panel
    top={904}
    height={242}
    legend={<IndicatorLegend name="RSI (14)" colors={["#000"]} />}
    ticks={[
      { y: 922, label: "100", bold: true },
      { y: 944 },
      { y: 964, label: "80" },
      { y: 986 },
      { y: 1006, label: "60" },
      { y: 1028 },
      { y: 1048, label: "40" },
      { y: 1068 },
      { y: 1090, label: "20" },
      { y: 1110 },
      { y: 1132, label: "0", bold: true, base: 1136 },
    ]}
    tags={[{ y: 1023, tick: 1040, label: "43,623", w: 84 }]}
  >
    <polyline points={trace(RSI)} fill="none" stroke="#000" strokeWidth="2" />
    <HLine y={988} color="#3030dc" width={2} />
    <HLine y={1070} color="#3030dc" width={2} />
  </Panel>
);

const VolumePanel = () => (
  <Panel
    top={1146}
    height={288}
    legend={<IndicatorLegend name="EccessoVolumePrezzo" colors={["#000", "#008000", "#ff0000"]} />}
    ticks={[
      { y: 1154, label: "20M", base: 1166 },
      { y: 1198, label: "15M", base: 1206 },
      { y: 1242, label: "10M", base: 1250 },
      { y: 1286, label: "5.000k" },
      { y: 1374, label: "–5.000k" },
      { y: 1418, label: "–10M", base: 1424 },
    ]}
    tags={[
      { y: 1311, tick: 1330, label: "0", w: 22 },
      { y: 1283, tick: 1300, label: "3.515k", w: 82, color: "#008000" },
      { y: 1325, tick: 1342, label: "–1.300k", w: 94 },
      { y: 1347, tick: 1356, label: "–2.796k", w: 94, color: "#ff0000" },
    ]}
    overlay={
      <svg x="100%" y="1146" overflow="visible">
        <path d="M-78 0v22M-1 0v22" stroke="#ff0000" strokeWidth="2" />
        <text x="-4" y="18" textAnchor="end" fontFamily={NUM_FONT} fontSize="22" fill="#ff0000">
          18,3M
        </text>
      </svg>
    }
  >
    <path d={`M0 1332H${barX(126)}`} stroke="#000" strokeWidth="2" />
    <polyline points={corners(UPPER_BAND)} fill="none" stroke="#008000" strokeWidth="6" strokeDasharray="6 10" />
    <polyline points={corners(LOWER_BAND)} fill="none" stroke="#ff0000" strokeWidth="6" strokeDasharray="6 10" />
    <polyline points={trace(EXCESS)} fill="none" stroke="#000" strokeWidth="4" strokeLinejoin="bevel" />
    <HLine y={1170} color="#ff0000" width={4} />
  </Panel>
);

const MansfieldPanel = () => {
  const area = `0,1576 ${trace(MANSFIELD)} ${barX(126)},1576`;
  return (
    <Panel
      top={1434}
      height={234}
      legend={<IndicatorLegend name="Forza relat Mansfield (FTSE MIB40 Index) (100 10)" colors={["#000"]} />}
      ticks={[
        { y: 1448, label: "1" },
        { y: 1510, label: "0,5" },
        { y: 1574, label: "0", bold: true },
        { y: 1638, label: "–0,5" },
      ]}
      tags={[{ y: 1573, tick: 1590, label: "–0,1169", w: 96 }]}
    >
      <polygon points={area} fill="url(#above)" clipPath="url(#aboveClip)" />
      <polygon points={area} fill="url(#below)" clipPath="url(#belowClip)" />
      <polyline points={trace(MANSFIELD)} fill="none" stroke="#000" strokeWidth="2" />
      <HLine y={1576} color="#3030dc" width={2} />
    </Panel>
  );
};

const TwoBarPanel = () => (
  <Panel
    top={1668}
    height={272}
    last
    legend={<IndicatorLegend name="TwoBarChartDailyWeekly" colors={["#008000", "#ff0000"]} />}
    ticks={[
      { y: 1690, label: "1" },
      { y: 1748, label: "0,5" },
      { y: 1806, label: "0", bold: true },
      { y: 1866, label: "–0,5" },
    ]}
    tags={[
      { y: 1893, tick: 1924, label: "–1", w: 34, color: "#ff0000" },
      { y: 1907, tick: 1924, label: "–1", w: 34, color: "#ff0000" },
    ]}
  >
    <g shapeRendering="crispEdges" strokeWidth="2">
      {DAILY_RUNS.slice(0, -1).flatMap((start, run) => {
        const up = run % 2 === 1;
        return Array.from({ length: DAILY_RUNS[run + 1] - start }, (_, k) => (
          <rect
            key={start + k}
            x={barX(start + k) - 10}
            y={up ? 1692 : 1808}
            width="18"
            height={up ? 116 : 118}
            fill={up ? "url(#barUp)" : "url(#barDown)"}
            stroke={up ? "#004f00" : "#c40000"}
          />
        ));
      })}
    </g>
    {WEEKLY.map((w, i) => (
      <polyline key={i} points={corners(w.points)} fill="none" stroke={w.color} strokeWidth="6" strokeLinejoin="bevel" />
    ))}
  </Panel>
);

const DateAxis = () => (
  <DateRow>
    <Canvas fontFamily={NUM_FONT} fontSize="22" textAnchor="middle">
      {DATES.map(([bar, label]) => {
        const x = `${(barX(bar) / PLOT_WIDTH) * 100}%`;
        const major = /[a-z]|2024/.test(label);
        return (
          <g key={bar}>
            <line x1={x} x2={x} y1="0" y2="5" stroke={LINE} strokeWidth="2" />
            <text x={x} y="28" fontWeight={major ? 700 : 400} fontSize={major ? 23 : 22}>
              {label}
            </text>
          </g>
        );
      })}
    </Canvas>
  </DateRow>
);

/* ---------- toolbars ---------- */

const Dropdown = ({ w, pad, name, value }: { w: number; pad: number; name: string; value: string }) => (
  <PickerCell $w={w}>
    <Picker $pad={pad} aria-label={name}>
      <option>{value}</option>
    </Picker>
    <Chevron />
  </PickerCell>
);

const Toolbar = () => (
  <TopBar>
    <WindowControls>
      <Dot />
      <BareButton aria-label="Ripristina finestra">
        <RestoreIcon />
      </BareButton>
    </WindowControls>
    <BarGroup>
      <BarCell $w={54} $end>
        <BareButton aria-label="Tipo di grafico">
          <CandlesIcon />
        </BareButton>
      </BarCell>
      <BarCell $w={36} $end>
        <BareButton aria-label="Collega">
          <LinkIcon />
        </BareButton>
      </BarCell>
      <Dropdown w={84} pad={7} name="Titolo" value="IRE" />
      <Dropdown w={140} pad={12} name="Periodo" value="1 giorno" />
      <Dropdown w={150} pad={12} name="Unità" value="100 unità" />
      <IndicatorButton>
        <IndicatorIcon />
        Indicatori
      </IndicatorButton>
      <BarCell $w={30} $grey>
        <BareButton aria-label="Altri indicatori">
          <Chevron />
        </BareButton>
      </BarCell>
      <Quote>
        <svg width="24" height="24">
          <InfoGlyph />
        </svg>
        <QuoteName>IREN</QuoteName>
        <QuotePrice>1,989</QuotePrice>
        <QuoteChange>–1,24%</QuoteChange>
        <QuoteDate>27 dic 2023</QuoteDate>
        <svg width="18" height="18" viewBox="0 0 18 18">
          <circle cx="9" cy="9" r="8" fill="#fff" opacity="0.7" />
          <circle cx="9" cy="9" r="6.500" fill="#eef6fc" stroke="#85868a" strokeWidth="2" />
        </svg>
      </Quote>
    </BarGroup>
    <ReloadCell aria-label="Aggiorna">
      <ReloadIcon />
    </ReloadCell>
  </TopBar>
);

const StopField = ({ name, on }: { name: string; on?: boolean }) => (
  <StopBox $active={on}>
    <StopCheck>
      <CheckStack>
        <CheckBox type="checkbox" defaultChecked={on} />
        {on && (
          <svg width="24" height="24" viewBox="0 0 24 24">
            <path d="M5 12l5 6 9-12" fill="none" stroke="#fff" strokeWidth="4" />
          </svg>
        )}
      </CheckStack>
      {name}
    </StopCheck>
    <NumberInput $w={48} $muted={!on} defaultValue="10" aria-label={`Valore ${name}`} />
    <Percent $muted={!on}>%</Percent>
  </StopBox>
);

const Trading = () => (
  <TradeStrip>
    <ToolCell>
      <WrenchButton aria-label="Impostazioni">
        <WrenchIcon color="#000" size={26} />
      </WrenchButton>
      <BareButton aria-label="Tastiera">
        <KeyboardIcon />
      </BareButton>
    </ToolCell>
    <QtyCell>
      <QtyTabs>
        <QtyTab>Qtà</QtyTab>
        <QtyTab $off>
          Qtà Auto
          <BubbleIcon />
        </QtyTab>
      </QtyTabs>
      <QtyField>
        <NumberInput $w={112} $right defaultValue="40" aria-label="Qtà" />
      </QtyField>
    </QtyCell>
    <OrderCell>
      <OrderButton>
        <OrderIcon limit />
        LIM
      </OrderButton>
      <OrderButton>
        <OrderIcon />
        STP
      </OrderButton>
    </OrderCell>
    <MarketButton $side="sell">
      Vendere MKT
      <MarketIcon />
    </MarketButton>
    <MarketButton $side="buy">
      Comprare MKT
      <MarketIcon />
    </MarketButton>
    <StopCell>
      <MultiRow>
        <MultiLabel>
          <Toggle type="checkbox" role="switch" />
          Multi T/S
        </MultiLabel>
        <BubbleIcon />
      </MultiRow>
      <StopRow>
        <StopField name="T" />
        <StopField name="S" on />
      </StopRow>
    </StopCell>
  </TradeStrip>
);

export default function App() {
  return (
    <Page>
      <GlobalStyle />
      <svg width="0" height="0">
        <Gradients />
      </svg>
      <Toolbar />
      <Body>
        <Trading />
        <PricePanel />
        <RsiPanel />
        <VolumePanel />
        <MansfieldPanel />
        <TwoBarPanel />
        <DateAxis />
        <BottomStrip />
      </Body>
    </Page>
  );
}
